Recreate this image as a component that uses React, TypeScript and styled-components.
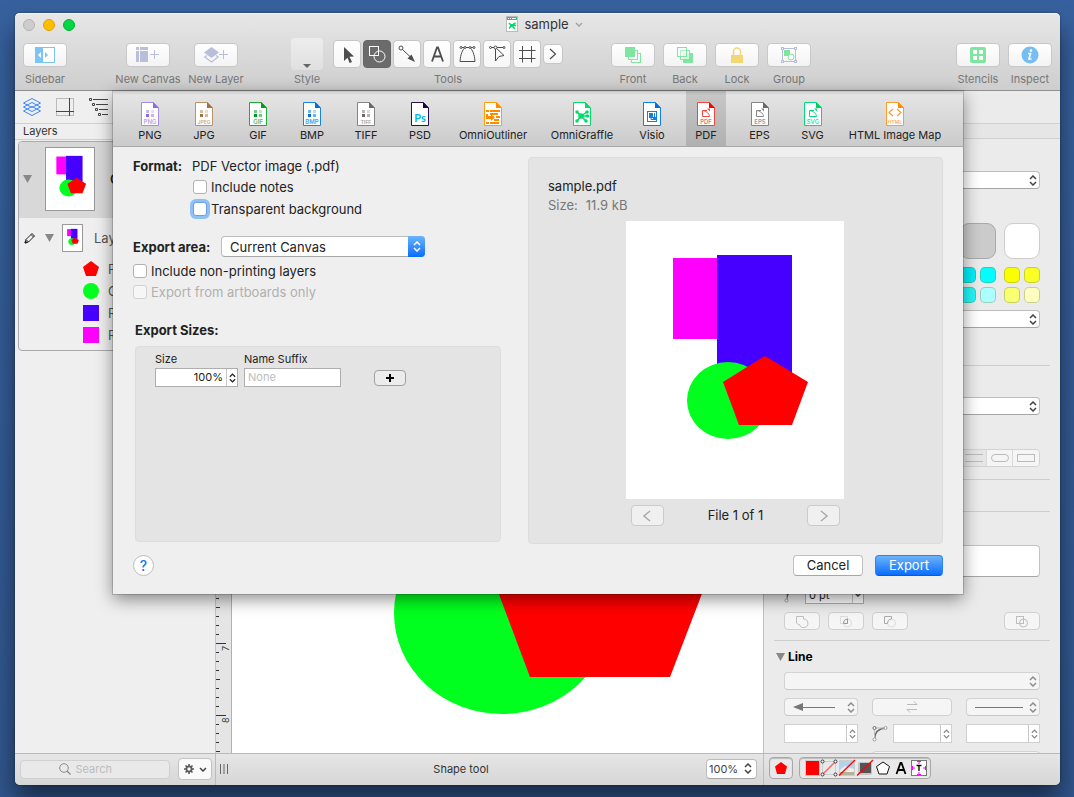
import React, { useState } from 'react';
import styled, { createGlobalStyle, css } from 'styled-components';

const GlobalStyle = createGlobalStyle`
  * { box-sizing: border-box; }
  html, body, #root { height: 100%; }
  body {
    margin: 0;
    background: #365f9b;
    font-family: Inter, "Liberation Sans", sans-serif;
    font-size: 13px;
    color: #222;
  }
  button, input, select {
    font: inherit;
    color: inherit;
    margin: 0;
    padding: 0;
  }
  svg { display: block; flex: none; }
`;

/* ---------- window ---------- */

const Desktop = styled.div`
  height: 100vh;
  padding: 13px 14px 12px 15px;
  background: linear-gradient(#37619e, #31568e);
  overflow: hidden;
`;

const Window = styled.main`
  height: 100%;
  display: flex;
  flex-direction: column;
  border-radius: 5px;
  background: #ebebeb;
  box-shadow: 0 0 2px rgba(0, 0, 0, 0.5), 0 16px 26px rgba(0, 0, 0, 0.5);
`;

const Header = styled.header`
  flex: none;
  border-radius: 5px 5px 0 0;
  border-bottom: 1px solid #8f8f8f;
  background: linear-gradient(#e7e7e7, #cecece);
  box-shadow: inset 0 1px 0 #f5f5f5;
`;

const TitleBar = styled.div`
  display: grid;
  grid-template-columns: 1fr auto 1fr;
  align-items: center;
  height: 24px;
  padding: 0 8px;
`;

const Lights = styled.div`
  display: flex;
  gap: 8px;
`;

const Light = styled.button<{ $fill: string; $edge: string }>`
  width: 12px;
  height: 12px;
  border: 1px solid ${(p) => p.$edge};
  border-radius: 50%;
  background: ${(p) => p.$fill};
`;

const Title = styled.h1`
  display: flex;
  align-items: center;
  gap: 6px;
  margin: 0;
  padding: 0 0 2px 14px;
  font-size: 13px;
  font-weight: 400;
  line-height: 20px;
  color: #333;
`;

const ToolRow = styled.div`
  display: flex;
  height: 53px;
  padding: 0 4px;
`;

const Spring = styled.span<{ $grow: number }>`
  flex: ${(p) => p.$grow} 1 0;
`;

const ToolItem = styled.div<{ $width?: number }>`
  flex: none;
  display: flex;
  flex-direction: column;
  align-items: center;
  ${(p) => p.$width && css`width: ${p.$width}px;`}
  font-size: 11px;
  line-height: 16px;
  color: #777;
  white-space: nowrap;
`;

const ToolSlot = styled.div<{ $gap?: number }>`
  display: flex;
  align-items: center;
  gap: ${(p) => p.$gap ?? 0}px;
  height: 34px;
`;

const ToolbarButton = styled.button`
  display: flex;
  align-items: center;
  justify-content: center;
  width: 44px;
  height: 24px;
  margin-top: 2px;
  border: 1px solid #c8c8c8;
  border-radius: 4px;
  background: linear-gradient(#fff, #f3f3f3);
`;

const StyleWell = styled.button`
  display: flex;
  align-items: flex-end;
  justify-content: center;
  width: 32px;
  height: 32px;
  padding-bottom: 2px;
  border: 0;
  border-radius: 4px;
  background: linear-gradient(#ededed, #e0e0e0);
`;

const ToolButton = styled.button<{ $active?: boolean; $small?: boolean }>`
  display: flex;
  align-items: center;
  justify-content: center;
  width: ${(p) => (p.$small ? 20 : 28)}px;
  height: ${(p) => (p.$small ? 20 : 28)}px;
  border: 1px solid ${(p) => (p.$active ? '#666' : '#c6c6c6')};
  border-radius: 4px;
  background: ${(p) => (p.$active ? '#6b6b6b' : 'linear-gradient(#fff, #f6f6f6)')};
`;

const Body = styled.div`
  position: relative;
  flex: 1;
  min-height: 0;
  display: flex;
`;

/* ---------- sidebar ---------- */

const Sidebar = styled.aside`
  flex: none;
  width: 201px;
  border-right: 1px solid #c4c4c4;
  background: #efefef;
  overflow: hidden;
`;

const SidebarTabs = styled.nav`
  display: flex;
  align-items: center;
  gap: 14px;
  height: 33px;
  padding: 0 8px;
  border-bottom: 1px solid #cfcfcf;
`;

const PlainButton = styled.button`
  display: flex;
  border: 0;
  background: none;
`;

const SidebarHeading = styled.h2`
  margin: 0;
  padding: 0 8px;
  border-bottom: 1px solid #cfcfcf;
  font-size: 11px;
  font-weight: 400;
  line-height: 15px;
  color: #333;
`;

const Outline = styled.div`
  margin: 1px 3px;
  border: 1px solid #a9a9a9;
  border-radius: 4px;
  overflow: hidden;
`;

const CanvasRow = styled.div`
  display: flex;
  align-items: center;
  height: 76px;
  padding: 0 0 2px 4px;
  background: #d8d8d8;
  font-weight: 600;
`;

const LayerRow = styled.div`
  display: flex;
  align-items: center;
  height: 40px;
  padding-left: 5px;
  color: #555;
`;

const ShapeRow = styled.div`
  display: flex;
  align-items: center;
  gap: 9px;
  height: 22px;
  padding-left: 64px;
  color: #555;
`;

const ShapeList = styled.div`
  padding-bottom: 4px;
`;

const Page = styled.div<{ $width: number; $height: number; $framed?: boolean; $left?: number; $right?: number }>`
  flex: none;
  width: ${(p) => p.$width}px;
  height: ${(p) => p.$height}px;
  margin-left: ${(p) => p.$left ?? 0}px;
  margin-right: ${(p) => p.$right ?? 0}px;
  border: ${(p) => (p.$framed ? '1px solid #999' : '0')};
  background: #fff;
  svg { width: 100%; height: 100%; }
`;

const PencilSlot = styled.span`
  flex: none;
  width: 21px;
`;

/* ---------- canvas ---------- */

const Ruler = styled.div`
  flex: none;
  width: 16px;
  border-right: 1px solid #b0b0b0;
  background: #e5e5e5;
  overflow: hidden;
`;

const Canvas = styled.section`
  flex: 1;
  min-width: 0;
  border-right: 1px solid #c0c0c0;
  background: #fff;
  overflow: hidden;
`;

/* ---------- inspector ---------- */

const Inspector = styled.aside`
  flex: none;
  width: 296px;
  background: #ebebeb;
  overflow: hidden;
`;

const InspectorTabs = styled.div`
  height: 33px;
  border-bottom: 1px solid #d0d0d0;
`;

const InspectorBand = styled.div`
  height: 15px;
  border-bottom: 1px solid #d0d0d0;
  background: #e6e6e6;
`;

const Section = styled.section<{ $height: number; $top: number; $last?: boolean }>`
  display: flex;
  flex-direction: column;
  height: ${(p) => p.$height}px;
  margin: 0 10px;
  padding: ${(p) => p.$top}px 10px 0;
  border-bottom: ${(p) => (p.$last ? '0' : '1px solid #cdcdcd')};
`;

const Stack = styled.div<{ $gap: number }>`
  display: flex;
  flex-direction: column;
  gap: ${(p) => p.$gap}px;
`;

const Line = styled.div<{ $between?: boolean; $end?: boolean; $gap?: number }>`
  display: flex;
  align-items: center;
  justify-content: ${(p) => (p.$between ? 'space-between' : p.$end ? 'flex-end' : 'flex-start')};
  gap: ${(p) => p.$gap ?? 0}px;
`;

const Popup = styled.div<{ $width?: number; $dim?: boolean; $height?: number }>`
  position: relative;
  flex: none;
  display: flex;
  align-items: center;
  width: ${(p) => (p.$width ? `${p.$width}px` : '100%')};
  height: ${(p) => p.$height ?? 18}px;
  border: 1px solid ${(p) => (p.$dim ? '#d3d3d3' : '#bdbdbd')};
  border-bottom-color: ${(p) => (p.$dim ? '#c8c8c8' : '#a6a6a6')};
  border-radius: 4px;
  background: ${(p) => (p.$dim ? '#f5f5f5' : '#fff')};
  color: ${(p) => (p.$dim ? '#8d8d8d' : '#444')};
  font-size: 11px;
`;

const PopupSelect = styled.select`
  width: 100%;
  height: 100%;
  padding-left: 2px;
  border: 0;
  border-radius: inherit;
  background: transparent;
  appearance: none;
  outline: 0;
`;

const Adornment = styled.span<{ $side: 'left' | 'right'; $at: number }>`
  position: absolute;
  top: 0;
  bottom: 0;
  ${(p) => p.$side}: ${(p) => p.$at}px;
  display: flex;
  align-items: center;
  pointer-events: none;
`;

const SwatchBlock = styled.div`
  display: flex;
  flex-direction: column;
  gap: 8px;
  margin: 34px 0 7px;
`;

const SwatchRow = styled.div`
  display: flex;
  justify-content: flex-end;
  gap: 8px;
`;

const BigSwatch = styled.button<{ $fill: string; $edge: string }>`
  width: 36px;
  height: 36px;
  border: 1px solid ${(p) => p.$edge};
  border-radius: 9px;
  background: ${(p) => p.$fill};
`;

const SwatchGrid = styled.div`
  display: grid;
  grid-template-columns: 16px 16px;
  gap: 4px;
`;

const SmallSwatch = styled.button<{ $fill: string }>`
  width: 16px;
  height: 16px;
  border: 1px solid rgba(110, 120, 60, 0.35);
  border-radius: 5px;
  background: ${(p) => p.$fill};
`;

const Segments = styled.div`
  display: flex;
  align-self: flex-end;
  height: 18px;
  border: 1px solid #d2d2d2;
  border-radius: 4px;
  overflow: hidden;
`;

const Segment = styled.button<{ $on?: boolean }>`
  display: flex;
  align-items: center;
  justify-content: center;
  width: 26px;
  border: 0;
  border-right: 1px solid #d8d8d8;
  background: ${(p) => (p.$on ? '#e6e6e6' : '#f5f5f5')};
  &:last-child { border-right: 0; }
`;

const NotesBox = styled.div`
  flex: none;
  height: 32px;
  border: 1px solid #c3c3c3;
  border-bottom-color: #a6a6a6;
  border-radius: 4px;
  background: #fff;
`;

const DimButton = styled.button<{ $width: number }>`
  display: flex;
  align-items: center;
  justify-content: center;
  width: ${(p) => p.$width}px;
  height: 18px;
  border: 1px solid #d0d0d0;
  border-radius: 4px;
  background: #f5f5f5;
`;

const Field = styled.div<{ $width: number; $dim?: boolean }>`
  flex: none;
  display: flex;
  width: ${(p) => p.$width}px;
  height: 19px;
  border: 1px solid ${(p) => (p.$dim ? '#cfcfcf' : '#aeaeae')};
  background: #fff;
  color: ${(p) => (p.$dim ? '#8d8d8d' : '#222')};
`;

const FieldInput = styled.input<{ $right?: boolean }>`
  flex: 1;
  min-width: 0;
  padding: 0 3px;
  border: 0;
  background: transparent;
  font-size: 11px;
  text-align: ${(p) => (p.$right ? 'right' : 'left')};
  outline: 0;
  &::placeholder { color: #bbb; opacity: 1; }
`;

const FieldStep = styled.button`
  flex: none;
  display: flex;
  align-items: center;
  justify-content: center;
  width: 11px;
  border: 0;
  border-left: 1px solid #c8c8c8;
  background: transparent;
`;

const LineHeading = styled.h2`
  display: flex;
  align-items: center;
  gap: 3px;
  margin: 0 0 7px -8px;
  font-size: 12px;
  font-weight: 700;
  line-height: 16px;
  color: #000;
`;

/* ---------- status bar ---------- */

const StatusBar = styled.footer`
  flex: none;
  display: flex;
  height: 32px;
  border-top: 1px solid #b9b9b9;
  border-radius: 0 0 5px 5px;
  background: linear-gradient(#e6e6e6, #d6d6d6);
  font-size: 11px;
  color: #333;
`;

const StatusLeft = styled.div`
  flex: none;
  display: flex;
  align-items: center;
  gap: 8px;
  width: 201px;
  padding: 0 3px 1px 5px;
  border-right: 1px solid #bdbdbd;
`;

const StatusMiddle = styled.div`
  flex: 1;
  display: flex;
  align-items: center;
  padding: 0 6px 2px 4px;
  border-right: 1px solid #bdbdbd;
`;

const StatusText = styled.span`
  flex: 1;
  padding-right: 12px;
  text-align: center;
`;

const StatusRight = styled.div`
  flex: none;
  display: flex;
  align-items: center;
  gap: 6px;
  width: 296px;
  padding: 0 0 3px 5px;
`;

const SearchBox = styled.label`
  flex: 1;
  display: flex;
  align-items: center;
  justify-content: center;
  gap: 5px;
  height: 19px;
  border: 1px solid #d0d0d0;
  border-radius: 4px;
  background: #e9e9e9;
`;

const SearchInput = styled.input`
  width: 56px;
  border: 0;
  background: none;
  font-size: 11px;
  appearance: none;
  outline: 0;
  &::placeholder { color: #bdbdbd; opacity: 1; }
`;

const GearButton = styled.button`
  display: flex;
  align-items: center;
  justify-content: center;
  gap: 5px;
  width: 34px;
  height: 22px;
  border: 1px solid #c2c2c2;
  border-radius: 4px;
  background: #fafafa;
`;

const StyleTray = styled.div`
  display: flex;
  align-items: center;
  height: 22px;
  padding: 0 2px;
  border: 1px solid #a8a8a8;
  border-radius: 4px;
  background: #e9e9e9;
  box-shadow: inset 0 1px 1px rgba(0, 0, 0, 0.2);
`;

const TrayButton = styled.button`
  display: flex;
  align-items: center;
  justify-content: center;
  width: 18px;
  height: 18px;
  border: 0;
  background: none;
`;

/* ---------- export sheet ---------- */

const SheetLayer = styled.div`
  position: absolute;
  inset: 0;
  z-index: 2;
  display: flex;
  align-items: flex-start;
  justify-content: center;
  padding-left: 1px;
  pointer-events: none;
`;

const Sheet = styled.form`
  width: 850px;
  background: #efefef;
  box-shadow: 0 0 0 1px rgba(0, 0, 0, 0.16), 0 5px 16px rgba(0, 0, 0, 0.45);
  pointer-events: auto;
`;

const FormatTabs = styled.nav`
  display: flex;
  gap: 14px;
  height: 56px;
  padding: 0 17px;
  border-bottom: 1px solid #a9a9a9;
  background: linear-gradient(#c9c9c9, #e4e4e4 4px, #cbcbcb);
`;

const FormatTab = styled.button<{ $width: number; $active?: boolean }>`
  flex: none;
  display: flex;
  flex-direction: column;
  align-items: center;
  gap: 1px;
  width: ${(p) => p.$width}px;
  padding-top: 11px;
  border: 0;
  background: ${(p) => (p.$active ? 'rgba(0, 0, 0, 0.13)' : 'none')};
  font-size: 11px;
  line-height: 16px;
  color: #222;
  white-space: nowrap;
`;

const SheetBody = styled.div`
  display: grid;
  grid-template-columns: 368px 415px;
  justify-content: space-between;
  padding: 10px 20px 0;
`;

const Options = styled.div`
  display: flex;
  flex-direction: column;
`;

const FormatLine = styled.div`
  display: grid;
  grid-template-columns: 59px 1fr;
  line-height: 19px;
`;

const Strong = styled.span`
  font-weight: 700;
`;

const CheckLine = styled.label<{ $indent?: boolean; $height: number; $dim?: boolean }>`
  display: flex;
  align-items: center;
  gap: 4px;
  height: ${(p) => p.$height}px;
  padding-left: ${(p) => (p.$indent ? 60 : 0)}px;
  color: ${(p) => (p.$dim ? '#b0b0b0' : '#222')};
`;

const CheckBox = styled.input<{ $focused?: boolean }>`
  appearance: none;
  width: 14px;
  height: 14px;
  border: 1px solid #b2b2b2;
  border-radius: 3px;
  background: #fff;
  &:checked { background: #2f8bf8; }
  &:disabled { border-color: #d2d2d2; background: #f6f6f6; }
  ${(p) => p.$focused && css`
    border-color: #6ba0dc;
    box-shadow: 0 0 0 3px #8cc0f7;
  `}
`;

const AreaLine = styled.div`
  display: grid;
  grid-template-columns: 88px 204px;
  align-items: center;
  height: 21px;
  margin: 16px 0 3px;
`;

const AreaSelectWrap = styled.div`
  position: relative;
  height: 21px;
`;

const AreaSelect = styled.select`
  width: 100%;
  height: 100%;
  padding: 0 26px 0 8px;
  border: 1px solid #bcbcbc;
  border-bottom-color: #a6a6a6;
  border-radius: 4px;
  background: #fff;
  appearance: none;
`;

const AreaCap = styled.span`
  position: absolute;
  top: 0;
  right: 0;
  bottom: 0;
  display: flex;
  align-items: center;
  justify-content: center;
  width: 17px;
  border-radius: 0 4px 4px 0;
  background: linear-gradient(#6cb3fa, #0a6dfe);
  color: #fff;
  pointer-events: none;
`;

const SizesHeading = styled.h2`
  margin: 18px 0 6px 2px;
  font-size: 13px;
  font-weight: 700;
  line-height: 20px;
`;

const SizesBox = styled.div`
  display: grid;
  grid-template-columns: 83px 97px auto;
  column-gap: 6px;
  align-content: start;
  height: 196px;
  margin-left: 2px;
  padding: 4px 19px;
  border: 1px solid #dcdcdc;
  border-radius: 4px;
  background: #e4e4e4;
  font-size: 11px;
  line-height: 17px;
`;

const AddButton = styled.button`
  grid-row: 2;
  grid-column: 3;
  align-self: center;
  display: flex;
  align-items: center;
  justify-content: center;
  width: 32px;
  height: 16px;
  margin-left: 27px;
  border: 1px solid #a0a0a0;
  border-radius: 4px;
  background: #ececec;
`;

const Preview = styled.section`
  display: flex;
  flex-direction: column;
  padding: 19px 21px 17px 19px;
  border: 1px solid #dcdcdc;
  border-radius: 4px;
  background: #e4e4e4;
  line-height: 19px;
`;

const SizeNote = styled.div`
  display: flex;
  gap: 8px;
  color: #777;
`;

const PageArea = styled.div`
  align-self: center;
  display: flex;
  flex-direction: column;
  gap: 6px;
  margin-top: 6px;
`;

const Pager = styled.div`
  display: flex;
  align-items: center;
  justify-content: space-between;
  padding: 0 3px 0 5px;
  line-height: 21px;
`;

const PagerButton = styled.button`
  display: flex;
  align-items: center;
  justify-content: center;
  width: 33px;
  height: 21px;
  border: 1px solid #cbcbcb;
  border-radius: 4px;
  background: #f0f0f0;
`;

const SheetFooter = styled.div`
  display: flex;
  align-items: center;
  gap: 12px;
  padding: 11px 20px 18px;
`;

const HelpButton = styled.button`
  width: 21px;
  height: 21px;
  margin-right: auto;
  border: 1px solid #bdbdbd;
  border-radius: 50%;
  background: #fff;
  font-size: 14px;
  font-weight: 500;
  line-height: 19px;
  color: #1478f0;
`;

const PushButton = styled.button<{ $primary?: boolean }>`
  width: ${(p) => (p.$primary ? 68 : 70)}px;
  height: 21px;
  border: 1px solid ${(p) => (p.$primary ? '#2b83f7' : '#c0c0c0')};
  border-bottom-color: ${(p) => (p.$primary ? '#0a55ee' : '#a6a6a6')};
  border-radius: 4px;
  background: ${(p) => (p.$primary ? 'linear-gradient(#6cb3fa, #0a6dfe)' : '#fff')};
  color: ${(p) => (p.$primary ? '#fff' : '#222')};
  line-height: 19px;
`;

/* ---------- drawings ---------- */

const Artwork = () => (
  <svg viewBox="0 0 218 278" aria-hidden="true">
    <rect x="47" y="37" width="45" height="81" fill="#f0f" />
    <rect x="91" y="34" width="75" height="118" fill="#4600ff" />
    <ellipse cx="102" cy="179.500" rx="41" ry="38.500" fill="#00ff1e" />
    <path d="M139 135L182 161L166 204H113L97 161Z" fill="#f00" />
  </svg>
);

const Chevrons = ({ size = 8 }: { size?: number }) => (
  <svg width={size} height={size + 3} viewBox="0 0 8 11" fill="none" stroke="currentColor" strokeWidth="1.5">
    <path d="M1 4L4 1L7 4M1 7L4 10L7 7" />
  </svg>
);

const ChevronDown = ({ color = '#444' }: { color?: string }) => (
  <svg width="8" height="5" viewBox="0 0 8 5" fill="none" stroke={color} strokeWidth="1.5">
    <path d="M1 1L4 4L7 1" />
  </svg>
);

const Disclosure = () => (
  <svg width="9" height="8" viewBox="0 0 9 8"><path d="M0 0H9L4.500 8Z" fill="#888" /></svg>
);

type DocKind = 'raster' | 'vector' | 'psd' | 'outliner' | 'graffle' | 'visio' | 'html';

const DocIcon = ({ color, kind, tag, dark }: { color: string; kind: DocKind; tag?: string; dark?: string }) => (
  <svg width="18" height="24" viewBox="0 0 18 24" aria-hidden="true">
    <path d="M.5 .5H12.500L17.500 6V23.500H.5Z" fill="#fff" stroke={color} />
    <path d="M12 0L18 6H12Z" fill={dark ?? color} />
    {kind === 'raster' && (
      <g fill={color}>
        <rect x="5" y="8" width="3" height="3" opacity=".6" />
        <rect x="10" y="8" width="3" height="3" opacity=".3" />
        <rect x="5" y="12" width="3" height="3" fill={dark ?? color} />
        <rect x="10" y="12" width="3" height="3" opacity=".65" />
      </g>
    )}
    {kind === 'vector' && (
      <g fill="none" stroke={color}>
        <path d="M10 8.500H5.500V14.500H12.500C12.500 12 10 9.500 6 8.500" />
        <path d="M10 6.500H13V9.500Z" fill={color} stroke="none" />
      </g>
    )}
    {kind === 'psd' && (
      <text x="9" y="20" textAnchor="middle" fontSize="11" fontWeight="700" fill="#00b9f2" fontFamily="Lato, sans-serif">Ps</text>
    )}
    {kind === 'outliner' && (
      <g fill={dark ?? color}>
        <rect x="2" y="8" width="3" height="2" /><rect x="6" y="8" width="10" height="2" />
        <rect x="6" y="11" width="8" height="2" />
        <path d="M2 12H4V14H7V12L11 15.500L7 19V17H2Z" />
        <rect x="12" y="14" width="4" height="2" />
        <rect x="10" y="17" width="5" height="2" />
        <rect x="2" y="20" width="3" height="2" /><rect x="6" y="20" width="9" height="2" />
      </g>
    )}
    {kind === 'graffle' && (
      <g stroke={color} strokeWidth="1.500" fill={color}>
        <path d="M8 14L4 10M8 14L14 10M8 14H16M8 14L4 19M8 14L13 19" />
        <circle cx="8" cy="14" r="2" /><circle cx="4" cy="10" r="1" /><circle cx="14" cy="10" r="1" />
        <circle cx="14.500" cy="14" r="1" /><circle cx="4" cy="19" r="1" /><circle cx="13" cy="19" r="1" />
      </g>
    )}
    {kind === 'visio' && (
      <g>
        <rect x="4.500" y="9.500" width="9" height="10" fill="none" stroke={color} />
        <rect x="6" y="11" width="4" height="5" fill={color} />
        <path d="M8 15V17.500H12M11.500 11V17" stroke={color} fill="none" />
        <rect x="10" y="15" width="3" height="3" fill={color} />
      </g>
    )}
    {kind === 'html' && (
      <path d="M7 7L3 10.500L7 14M11 7L15 10.500L11 14" fill="none" stroke={color} strokeWidth="1.200" />
    )}
    {tag && (
      <text x="9" y="21.500" textAnchor="middle" fontSize={tag.length > 3 ? 5 : 6} fontWeight="600" fill={color} opacity=".8">{tag}</text>
    )}
  </svg>
);

const formats: { name: string; width: number; color: string; dark?: string; kind: DocKind; tag?: string }[] = [
  { name: 'PNG', width: 40, color: '#a88be8', dark: '#8e6be0', kind: 'raster', tag: 'PNG' },
  { name: 'JPG', width: 40, color: '#bd9268', dark: '#a4713f', kind: 'raster', tag: 'JPEG' },
  { name: 'GIF', width: 40, color: '#1cad3c', dark: '#009c1c', kind: 'raster', tag: 'GIF' },
  { name: 'BMP', width: 40, color: '#1486e0', dark: '#0070dc', kind: 'raster', tag: 'BMP' },
  { name: 'TIFF', width: 40, color: '#858585', dark: '#686868', kind: 'raster', tag: 'TIFF' },
  { name: 'PSD', width: 40, color: '#2b1150', dark: '#1f0545', kind: 'psd' },
  { name: 'OmniOutliner', width: 78, color: '#ff9d0a', dark: '#ff8a00', kind: 'outliner' },
  { name: 'OmniGraffle', width: 72, color: '#04da68', kind: 'graffle' },
  { name: 'Visio', width: 40, color: '#1080e4', dark: '#0070dc', kind: 'visio' },
  { name: 'PDF', width: 40, color: '#f6453f', dark: '#f00', kind: 'vector', tag: 'PDF' },
  { name: 'EPS', width: 39, color: '#858585', dark: '#686868', kind: 'vector', tag: 'EPS' },
  { name: 'SVG', width: 39, color: '#04da7c', dark: '#00d060', kind: 'vector', tag: 'SVG' },
  { name: 'HTML Image Map', width: 98, color: '#ff9a2e', dark: '#ff8a00', kind: 'html', tag: 'HTML' },
];

const LAV = '#b9bfdb';
const GREEN = '#7fe6a0';

const SidebarIcon = () => (
  <svg width="20" height="16" viewBox="0 0 20 16">
    <rect width="20" height="16" fill="#7cc4f6" /><rect x="8" y="1" width="11" height="14" fill="#fff" />
    <path d="M6 5V11L3 8Z" fill="#fff" /><path d="M10 5V11L13 8Z" fill="#7cc4f6" />
  </svg>
);
const NewCanvasIcon = () => (
  <svg width="24" height="16" viewBox="0 0 24 16" fill={LAV}>
    <path d="M0 0H3V3H0ZM4 0H12V3H4ZM0 4H3V15H0ZM4 4H12V15H4Z" />
    <path d="M14 7.500H23M18.500 3V12" stroke={LAV} />
  </svg>
);
const NewLayerIcon = () => (
  <svg width="24" height="16" viewBox="0 0 24 16">
    <path d="M0 5.500L7.500 0L15 5.500L7.500 11Z" fill={LAV} />
    <path d="M3 8.500L.8 10L7.500 15L14.200 10L12 8.500" fill="none" stroke={LAV} strokeWidth="1.200" />
    <path d="M15 7.500H24M19.500 3V12" stroke={LAV} />
  </svg>
);
const FrontIcon = () => (
  <svg width="18" height="17" viewBox="0 0 18 17" fill="#fafafa" stroke={GREEN}>
    <rect x="7.500" y="6.500" width="9" height="9" /><rect x="4.500" y="3.500" width="9" height="9" />
    <rect x="1" y="0" width="10" height="10" fill={GREEN} stroke="none" />
  </svg>
);
const BackIcon = () => (
  <svg width="18" height="17" viewBox="0 0 18 17" stroke={GREEN}>
    <rect x="7" y="6" width="10" height="10" fill={GREEN} stroke="none" />
    <rect x="4.500" y="3.500" width="9" height="9" fill="#fff" fillOpacity=".65" /><rect x="1.500" y=".5" width="9" height="9" fill="#fff" fillOpacity=".4" />
  </svg>
);
const LockIcon = () => (
  <svg width="12" height="17" viewBox="0 0 12 17">
    <rect y="8" width="12" height="8" fill="#f3d675" /><path d="M2.500 8V4.500A3.500 3.500 0 0 1 9.500 4.500V8" fill="none" stroke="#f3d675" strokeWidth="1.500" />
  </svg>
);
const GroupIcon = () => (
  <svg width="16" height="16" viewBox="0 0 16 16" fill="none" stroke={LAV}>
    <rect x="1.500" y="1.500" width="13" height="13" />
    <g fill="#fff"><rect x=".5" y=".5" width="2" height="2" /><rect x="13.500" y=".5" width="2" height="2" /><rect x=".5" y="13.500" width="2" height="2" /><rect x="13.500" y="13.500" width="2" height="2" /></g>
    <rect x="3" y="3" width="6" height="6" fill={GREEN} stroke="none" /><circle cx="10" cy="10" r="3" fill="#fff" stroke={GREEN} />
  </svg>
);
const StencilsIcon = () => (
  <svg width="16" height="16" viewBox="0 0 16 16">
    <rect width="16" height="16" rx="2" fill={GREEN} />
    <path d="M3 3H7V7H3ZM9 3H13V7H9ZM3 9H7V13H3ZM9 9H13V13H9Z" fill="#fff" />
  </svg>
);
const InspectIcon = () => (
  <svg width="18" height="18" viewBox="0 0 18 18">
    <circle cx="9" cy="9" r="8.500" fill="#76bdf4" />
    <path d="M7 7.500H9.500L8 13H10.500" fill="none" stroke="#fff" strokeWidth="1.700" /><circle cx="10" cy="4.500" r="1.300" fill="#fff" />
  </svg>
);

const TitleDocIcon = () => (
  <svg width="12" height="16" viewBox="0 0 12 16">
    <rect x=".5" y=".5" width="11" height="15" fill="#fff" stroke="#bbb" /><rect x="1" y="1" width="10" height="3" fill="#04d968" />
    <path d="M2 2.500H3M4 2.500H5M6 2.500H10" stroke="#fff" />
    <path d="M5.500 9.500L3 7M5.500 9.500L9.500 7M5.500 9.500H10M5.500 9.500L3 12.500M5.500 9.500L9 13" stroke="#04d968" strokeWidth="1.500" />
    <circle cx="5.500" cy="9.500" r="1.500" fill="#04d968" />
  </svg>
);

const toolIcons: { name: string; active?: boolean; art: React.ReactNode }[] = [
  { name: 'Selection', art: <path d="M7 3L17 12.500L12.500 12.800L15 18L12.600 19L10.500 13.800L7 17Z" fill="#4d4d4d" stroke="none" /> },
  { name: 'Shape', active: true, art: <g stroke="#fff"><rect x="2.500" y="2.500" width="9" height="9" /><circle cx="12.500" cy="12.500" r="5.500" /></g> },
  { name: 'Line', art: <g><circle cx="4" cy="4" r="2" /><path d="M5.500 5.500L14 13.500" /><path d="M18 18L10.500 14.500L14.500 10.500Z" fill="#4d4d4d" stroke="none" /></g> },
  { name: 'Text', art: <path d="M5 17.500L10 3.500H11L16 17.500M7 12.500H14" strokeWidth="1.800" /> },
  { name: 'Pen', art: <g><path d="M3 17.500H18C17.500 10 15.500 6 13 3.500H8C5.500 6 3.500 10 3 17.500ZM4 3.500H17" /><circle cx="4" cy="3.500" r="1" fill="#fff" /><circle cx="17" cy="3.500" r="1" fill="#fff" /><circle cx="8" cy="3.500" r="1" fill="#fff" /><circle cx="13" cy="3.500" r="1" fill="#fff" /></g> },
  { name: 'Point editor', art: <g><path d="M3 3.500H17M8.500 3.500V17L12 12.500L17 11.500Z" /><circle cx="3.500" cy="3.500" r="1" fill="#fff" /><circle cx="17" cy="3.500" r="1" fill="#fff" /><circle cx="8.500" cy="3.500" r="1.500" fill="#fff" /></g> },
  { name: 'Artboard', art: <path d="M5.500 2V18.500M14.500 2V18.500M2 6.500H18.500M2 14.500H18.500" /> },
];

const BoolIcon = ({ kind }: { kind: number }) => (
  <svg width="14" height="13" viewBox="0 0 14 13" fill="none" stroke="#bdbdbd">
    {kind === 0 && <path d="M1.500 1.500H8.500V4A4.300 4.300 0 1 1 4.500 9.500H3.500L1.500 8Z" />}
    {kind === 1 && <g><rect x="1.500" y="1.500" width="7" height="7" stroke="#ddd" /><circle cx="8.500" cy="8" r="4" stroke="#ddd" /><path d="M8.500 4V8.500H4.500C4.500 6 6 4 8.500 4Z" stroke="#999" /></g>}
    {kind === 2 && <g><circle cx="8.500" cy="8" r="4" stroke="#ddd" /><path d="M8.500 4V1.500H1.500V8.500H4.500C4.500 6 6 4 8.500 4Z" stroke="#aaa" /></g>}
    {kind === 3 && <g><rect x="1.500" y="1.500" width="7" height="7" /><circle cx="8.500" cy="8" r="4" /></g>}
  </svg>
);

const CurveIcon = () => (
  <svg width="16" height="17" viewBox="0 0 16 17" fill="#fff" stroke="#999">
    <path d="M2.500 14C3 8 6 3.500 13 3" fill="none" stroke="#666" strokeWidth="1.300" /><path d="M2.500 3V14M2 3H13" stroke="#bbb" fill="none" />
    <circle cx="2.500" cy="3" r="1.500" stroke="#666" /><circle cx="13.500" cy="3" r="1.500" /><circle cx="2.500" cy="14.500" r="1.500" />
  </svg>
);

const EmptyPopup = ({ label, width, dim, children }: { label: string; width?: number; dim?: boolean; children?: React.ReactNode }) => (
  <Popup $width={width} $dim={dim}>
    <PopupSelect aria-label={label} disabled={dim}><option value="" /></PopupSelect>
    {children && <Adornment $side="left" $at={8}>{children}</Adornment>}
    <Adornment $side="right" $at={2}><Chevrons /></Adornment>
  </Popup>
);

const StepField = ({ label, width, dim, value = '' }: { label: string; width: number; dim?: boolean; value?: string }) => (
  <Field $width={width} $dim={dim}>
    <FieldInput aria-label={label} defaultValue={value} />
    <FieldStep type="button" aria-label={`${label} stepper`}><Chevrons size={7} /></FieldStep>
  </Field>
);

const ToolbarAction = ({ label, width = 52, icon }: { label: string; width?: number; icon: React.ReactNode }) => (
  <ToolItem $width={width}>
    <ToolSlot><ToolbarButton type="button" aria-label={label}>{icon}</ToolbarButton></ToolSlot>
    {label}
  </ToolItem>
);

const rulerTicks = Array.from({ length: 69 }, (_, i) => i);

const VerticalRuler = () => (
  <svg width="15" height="662" viewBox="0 0 15 662">
    {rulerTicks.map((i) => (
      <g key={i}>
        <rect x="0" y={48 + i * 9} width={i % 8 === 0 ? 10 : i % 4 === 0 ? 4 : 3} height="1" fill="#333" />
        {i % 8 === 0 && (
          <text transform={`translate(13 ${56 + i * 9}) rotate(-90)`} fontSize="9" fill="#444">{i / 8}</text>
        )}
      </g>
    ))}
  </svg>
);

const shapes = [
  { name: 'Pentagon', art: <path d="M8 0L16 6L13 15H3L0 6Z" fill="#f00" /> },
  { name: 'Circle', art: <circle cx="8" cy="8" r="8" fill="#00ff1e" /> },
  { name: 'Rectangle', art: <rect width="16" height="16" fill="#4600ff" /> },
  { name: 'Rectangle', art: <rect width="16" height="16" fill="#f0f" /> },
];

const cyans = ['#00f0f8', '#00ffff', '#22f8fa', '#adffff'];
const yellows = ['#faff00', '#faff25', '#f8ff70', '#feffbe'];

const trayIcons: { name: string; art: React.ReactNode }[] = [
  { name: 'Fill', art: <rect x="3.500" y="1.500" width="14" height="15" fill="#f00" stroke="#ccc" /> },
  { name: 'Stroke', art: <g fill="#fff" stroke="#333"><rect x="2.500" y="2.500" width="13" height="13" fill="none" stroke="#ccc" /><path d="M3 15L15 3" stroke="#f66" strokeWidth="1.500" /><circle cx="2.500" cy="2.500" r="1.500" /><circle cx="15.500" cy="2.500" r="1.500" /><circle cx="2.500" cy="15.500" r="1.500" /><circle cx="15.500" cy="15.500" r="1.500" /></g> },
  { name: 'Image', art: <g><rect x="1.500" y="1.500" width="15" height="15" fill="#b4d2ec" stroke="#ccc" /><path d="M2 11L7 7L16 10V16H2Z" fill="#eee" /><rect x="2" y="13" width="14" height="3" fill="#b5b297" /><path d="M1 16.500L17 1" stroke="#f00" strokeWidth="1.300" /></g> },
  { name: 'Shadow', art: <g><rect x="2" y="3" width="14" height="13" rx="2" fill="#aaa" opacity=".6" /><rect x="4" y="4" width="11" height="10" fill="#555" /><path d="M1 16.500L17 1" stroke="#f00" strokeWidth="1.300" /></g> },
  { name: 'Shape', art: <path d="M9 3L15.500 7.500L13 15H5L2.500 7.500Z" fill="#fff" stroke="#111" /> },
  { name: 'Font', art: <path d="M4.500 15L8.500 4H9.500L13.500 15M6.500 11H11.500" fill="none" stroke="#000" strokeWidth="1.800" /> },
  { name: 'Text position', art: <g><rect x="1.500" y="1.500" width="15" height="15" fill="#fff" stroke="#777" /><path d="M7 2.500H11M9 2V5M7 15.500H11M9 13V16M2.500 7V11M2 9H5M15.500 7V11M13 9H16" stroke="#f0f" /><path d="M6.500 6.500H11.500M9 6V12" stroke="#000" strokeWidth="1.300" /></g> },
];

export default function App() {
  const [format, setFormat] = useState('PDF');

  return (
    <>
      <GlobalStyle />
      <Desktop>
        <Window>
          <Header>
            <TitleBar>
              <Lights>
                <Light type="button" aria-label="Close" $fill="#cdcdcd" $edge="#b4b4b4" />
                <Light type="button" aria-label="Minimize" $fill="#ffbf00" $edge="#e3a000" />
                <Light type="button" aria-label="Zoom" $fill="#00d744" $edge="#04b32e" />
              </Lights>
              <Title><TitleDocIcon />sample<ChevronDown color="#a5a5a5" /></Title>
            </TitleBar>
            <ToolRow>
              <ToolbarAction label="Sidebar" icon={<SidebarIcon />} />
              <Spring $grow={43} />
              <ToolbarAction label="New Canvas" width={68} icon={<NewCanvasIcon />} />
              <ToolbarAction label="New Layer" width={68} icon={<NewLayerIcon />} />
              <Spring $grow={41} />
              <ToolItem $width={32}>
                <ToolSlot>
                  <StyleWell type="button" aria-label="Style">
                    <svg width="8" height="4" viewBox="0 0 8 4"><path d="M0 0H8L4 4Z" fill="#666" /></svg>
                  </StyleWell>
                </ToolSlot>
                Style
              </ToolItem>
              <Spring $grow={10} />
              <ToolItem>
                <ToolSlot $gap={2}>
                  {toolIcons.map((t) => (
                    <ToolButton key={t.name} type="button" aria-label={t.name} $active={t.active}>
                      <svg width="21" height="21" viewBox="0 0 21 21" fill="none" stroke="#4d4d4d">{t.art}</svg>
                    </ToolButton>
                  ))}
                  <ToolButton type="button" aria-label="More tools" $small>
                    <svg width="8" height="12" viewBox="0 0 8 12" fill="none" stroke="#4d4d4d" strokeWidth="1.200"><path d="M1 1L6.500 6L1 11" /></svg>
                  </ToolButton>
                </ToolSlot>
                Tools
              </ToolItem>
              <Spring $grow={44} />
              <ToolbarAction label="Front" icon={<FrontIcon />} />
              <ToolbarAction label="Back" icon={<BackIcon />} />
              <ToolbarAction label="Lock" icon={<LockIcon />} />
              <ToolbarAction label="Group" icon={<GroupIcon />} />
              <Spring $grow={137} />
              <ToolbarAction label="Stencils" icon={<StencilsIcon />} />
              <ToolbarAction label="Inspect" icon={<InspectIcon />} />
            </ToolRow>
          </Header>

          <Body>
            <Sidebar>
              <SidebarTabs>
                <PlainButton type="button" aria-label="Layers">
                  <svg width="18" height="18" viewBox="0 0 18 18" fill="none" stroke="#3b87f7">
                    <path d="M.5 5L9 .5L17.500 5L9 9.500ZM.5 9L9 4.500L17.500 9L9 13.500ZM.5 13L9 8.500L17.500 13L9 17.500Z" />
                  </svg>
                </PlainButton>
                <PlainButton type="button" aria-label="Guides">
                  <svg width="20" height="18" viewBox="0 0 20 18" fill="none">
                    <rect x="1.500" y=".5" width="17" height="17" stroke="#bbb" /><path d="M1 13.500H19M14.500 0V18" stroke="#444" />
                  </svg>
                </PlainButton>
                <PlainButton type="button" aria-label="Outline">
                  <svg width="20" height="18" viewBox="0 0 20 18" fill="none" stroke="#444">
                    <path d="M4 1.500H19M7 6.500H19M10 11.500H19M13 16.500H19" />
                    <path d="M.5 .5H2.500V2.500H.5ZM3.500 5.500H5.500V7.500H3.500ZM6.500 10.500H8.500V12.500H6.500ZM9.500 15.500H11.500V17.500H9.500Z" />
                  </svg>
                </PlainButton>
              </SidebarTabs>
              <SidebarHeading>Layers</SidebarHeading>
              <Outline>
                <CanvasRow>
                  <Disclosure />
                  <Page $width={50} $height={64} $left={13} $right={15} $framed><Artwork /></Page>
                  Canvas 1
                </CanvasRow>
                <LayerRow>
                  <PencilSlot>
                    <svg width="12" height="12" viewBox="0 0 12 12" fill="none" stroke="#222">
                      <path d="M1 11L2 7.500L8 1.500L10.500 4L4.500 10ZM2 7.500L4.500 10M7 2.500L9.500 5" /><path d="M1 11L1.500 9L3 10.500Z" fill="#222" />
                    </svg>
                  </PencilSlot>
                  <Disclosure />
                  <Page $width={21} $height={28} $left={8} $right={11} $framed><Artwork /></Page>
                  Layer 1
                </LayerRow>
                <ShapeList>
                  {shapes.map((s, i) => (
                    <ShapeRow key={i}>
                      <svg width="16" height="16" viewBox="0 0 16 16">{s.art}</svg>
                      {s.name}
                    </ShapeRow>
                  ))}
                </ShapeList>
              </Outline>
            </Sidebar>

            <Ruler><VerticalRuler /></Ruler>

            <Canvas aria-label="Canvas">
              <svg width="531" height="662" viewBox="0 0 531 662">
                <rect x="146" y="153" width="118" height="211" fill="#f0f" />
                <rect x="263" y="146" width="195" height="305" fill="#4600ff" />
                <ellipse cx="270" cy="522" rx="108" ry="101" fill="#00ff1e" />
                <path d="M368 406L481 474L438 586H298L256 474Z" fill="#f00" />
              </svg>
            </Canvas>

            <Inspector>
              <InspectorTabs />
              <InspectorBand />
              <Section $height={227} $top={32}>
                <EmptyPopup label="Fill type" />
                <SwatchBlock>
                  <SwatchRow>
                    <BigSwatch type="button" aria-label="Gray" $fill="#cbcbcb" $edge="#a9a9a9" />
                    <BigSwatch type="button" aria-label="White" $fill="#fff" $edge="#cdcdcd" />
                  </SwatchRow>
                  <SwatchRow>
                    <SwatchGrid>{cyans.map((c) => <SmallSwatch key={c} type="button" aria-label={c} $fill={c} />)}</SwatchGrid>
                    <SwatchGrid>{yellows.map((c) => <SmallSwatch key={c} type="button" aria-label={c} $fill={c} />)}</SwatchGrid>
                  </SwatchRow>
                </SwatchBlock>
                <EmptyPopup label="Palette" />
              </Section>
              <Section $height={114} $top={31}>
                <Stack $gap={34}>
                  <EmptyPopup label="Stroke type" />
                  <Segments>
                    <Segment type="button" aria-label="Open ends" $on>
                      <svg width="18" height="8" viewBox="0 0 18 8" fill="none" stroke="#bbb"><path d="M0 .5H18M0 7.500H18" /></svg>
                    </Segment>
                    <Segment type="button" aria-label="Round ends">
                      <svg width="18" height="8" viewBox="0 0 18 8" fill="none" stroke="#bbb"><rect x=".5" y=".5" width="17" height="7" rx="3.500" /></svg>
                    </Segment>
                    <Segment type="button" aria-label="Square ends">
                      <svg width="18" height="8" viewBox="0 0 18 8" fill="none" stroke="#bbb"><rect x=".5" y=".5" width="17" height="7" /></svg>
                    </Segment>
                  </Segments>
                </Stack>
              </Section>
              <Section $height={32} $top={0} />
              <Section $height={129} $top={33}>
                <Stack $gap={8}>
                  <NotesBox />
                  <Line $gap={5}>
                    <CurveIcon />
                    <Field $width={59}>
                      <FieldInput aria-label="Corner radius" defaultValue="0 pt" />
                      <FieldStep type="button" aria-label="Corner radius options"><ChevronDown /></FieldStep>
                    </Field>
                  </Line>
                  <Line $between>
                    <Line $gap={8}>
                      <DimButton type="button" aria-label="Union" $width={36}><BoolIcon kind={0} /></DimButton>
                      <DimButton type="button" aria-label="Intersect" $width={36}><BoolIcon kind={1} /></DimButton>
                      <DimButton type="button" aria-label="Subtract" $width={36}><BoolIcon kind={2} /></DimButton>
                    </Line>
                    <DimButton type="button" aria-label="Combine" $width={36}><BoolIcon kind={3} /></DimButton>
                  </Line>
                </Stack>
              </Section>
              <Section $height={140} $top={8} $last>
                <LineHeading><Disclosure />Line</LineHeading>
                <Stack $gap={8}>
                  <EmptyPopup label="Line type" dim />
                  <Line $between>
                    <EmptyPopup label="Line start" width={74} dim>
                      <svg width="43" height="8" viewBox="0 0 43 8"><path d="M0 4L10 0V8Z" fill="#777" /><path d="M9 4.500H42" stroke="#777" /></svg>
                    </EmptyPopup>
                    <DimButton type="button" aria-label="Swap ends" $width={80}>
                      <svg width="12" height="12" viewBox="0 0 12 12" fill="none" stroke="#bbb"><path d="M1 3.500H11L8 .5M11 8.500H1L4 11.500" /></svg>
                    </DimButton>
                    <EmptyPopup label="Line end" width={74} dim>
                      <svg width="48" height="2" viewBox="0 0 48 2"><path d="M0 1.500H48" stroke="#777" /></svg>
                    </EmptyPopup>
                  </Line>
                  <Line $between>
                    <StepField label="Start scale" width={74} dim />
                    <Line $gap={5}>
                      <CurveIcon />
                      <StepField label="Curve radius" width={59} dim />
                    </Line>
                    <StepField label="End scale" width={74} dim />
                  </Line>
                  <Line $end>
                    <EmptyPopup label="Line hops" width={168} dim />
                  </Line>
                </Stack>
              </Section>
            </Inspector>

            <SheetLayer>
              <Sheet role="dialog" aria-label="Export" onSubmit={(e) => e.preventDefault()}>
                <FormatTabs>
                  {formats.map((f) => (
                    <FormatTab key={f.name} type="button" $width={f.width} $active={f.name === format} onClick={() => setFormat(f.name)}>
                      <DocIcon color={f.color} dark={f.dark} kind={f.kind} tag={f.tag} />
                      {f.name}
                    </FormatTab>
                  ))}
                </FormatTabs>
                <SheetBody>
                  <Options>
                    <FormatLine><Strong>Format:</Strong><span>PDF Vector image (.pdf)</span></FormatLine>
                    <CheckLine $indent $height={22}><CheckBox type="checkbox" />Include notes</CheckLine>
                    <CheckLine $indent $height={22}><CheckBox type="checkbox" $focused />Transparent background</CheckLine>
                    <AreaLine>
                      <Strong as="label" htmlFor="area">Export area:</Strong>
                      <AreaSelectWrap>
                        <AreaSelect id="area"><option>Current Canvas</option></AreaSelect>
                        <AreaCap><Chevrons /></AreaCap>
                      </AreaSelectWrap>
                    </AreaLine>
                    <CheckLine $height={21}><CheckBox type="checkbox" />Include non-printing layers</CheckLine>
                    <CheckLine $height={21} $dim><CheckBox type="checkbox" disabled />Export from artboards only</CheckLine>
                    <SizesHeading>Export Sizes:</SizesHeading>
                    <SizesBox>
                      <label htmlFor="size">Size</label>
                      <label htmlFor="suffix">Name Suffix</label>
                      <span />
                      <Field $width={83}>
                        <FieldInput id="size" defaultValue="100%" $right />
                        <FieldStep type="button" aria-label="Size stepper"><Chevrons size={7} /></FieldStep>
                      </Field>
                      <Field $width={97}><FieldInput id="suffix" placeholder="None" /></Field>
                      <AddButton type="button" aria-label="Add size">
                        <svg width="8" height="8" viewBox="0 0 8 8"><path d="M0 4H8M4 0V8" stroke="#000" strokeWidth="2" /></svg>
                      </AddButton>
                    </SizesBox>
                  </Options>
                  <Preview>
                    <span>sample.pdf</span>
                    <SizeNote><span>Size:</span><span>11.9 kB</span></SizeNote>
                    <PageArea>
                      <Page $width={218} $height={278}><Artwork /></Page>
                      <Pager>
                        <PagerButton type="button" aria-label="Previous file">
                          <svg width="8" height="12" viewBox="0 0 8 12" fill="none" stroke="#aaa" strokeWidth="1.500"><path d="M7 1L1 6L7 11" /></svg>
                        </PagerButton>
                        File 1 of 1
                        <PagerButton type="button" aria-label="Next file">
                          <svg width="8" height="12" viewBox="0 0 8 12" fill="none" stroke="#aaa" strokeWidth="1.500"><path d="M1 1L7 6L1 11" /></svg>
                        </PagerButton>
                      </Pager>
                    </PageArea>
                  </Preview>
                </SheetBody>
                <SheetFooter>
                  <HelpButton type="button" aria-label="Help">?</HelpButton>
                  <PushButton type="button">Cancel</PushButton>
                  <PushButton type="submit" $primary>Export</PushButton>
                </SheetFooter>
              </Sheet>
            </SheetLayer>
          </Body>

          <StatusBar>
            <StatusLeft>
              <SearchBox>
                <svg width="12" height="12" viewBox="0 0 12 12" fill="none" stroke="#8a8a8a"><circle cx="5" cy="5" r="4.300" /><path d="M8 8L11.500 11.500" strokeWidth="1.300" /></svg>
                <SearchInput type="search" placeholder="Search" aria-label="Search" />
              </SearchBox>
              <GearButton type="button" aria-label="Actions">
                <svg width="10" height="10" viewBox="0 0 10 10" fill="none" stroke="#5a5a5a">
                  <circle cx="5" cy="5" r="2.600" strokeWidth="1.800" />
                  <path d="M5 0V2M5 8V10M0 5H2M8 5H10M1.500 1.500L3 3M7 7L8.500 8.500M8.500 1.500L7 3M3 7L1.500 8.500" strokeWidth="1.600" />
                </svg>
                <ChevronDown />
              </GearButton>
            </StatusLeft>
            <StatusMiddle>
              <svg width="8" height="10" viewBox="0 0 8 10" stroke="#666"><path d="M.5 0V10M4 0V10M7.500 0V10" /></svg>
              <StatusText>Shape tool</StatusText>
              <Popup $width={51} $height={20}>
                <PopupSelect aria-label="Zoom level"><option>100%</option></PopupSelect>
                <Adornment $side="right" $at={4}><Chevrons /></Adornment>
              </Popup>
            </StatusMiddle>
            <StatusRight>
              <StyleTray>
                <TrayButton type="button" aria-label="Selected style">
                  <svg width="12" height="12" viewBox="0 0 12 12"><path d="M6 0L12 4.500L10 12H2L0 4.500Z" fill="#f00" /></svg>
                </TrayButton>
              </StyleTray>
              <StyleTray>
                {trayIcons.map((t) => (
                  <TrayButton key={t.name} type="button" aria-label={t.name}>
                    <svg width="18" height="18" viewBox="0 0 18 18">{t.art}</svg>
                  </TrayButton>
                ))}
              </StyleTray>
            </StatusRight>
          </StatusBar>
        </Window>
      </Desktop>
    </>
  );
}
